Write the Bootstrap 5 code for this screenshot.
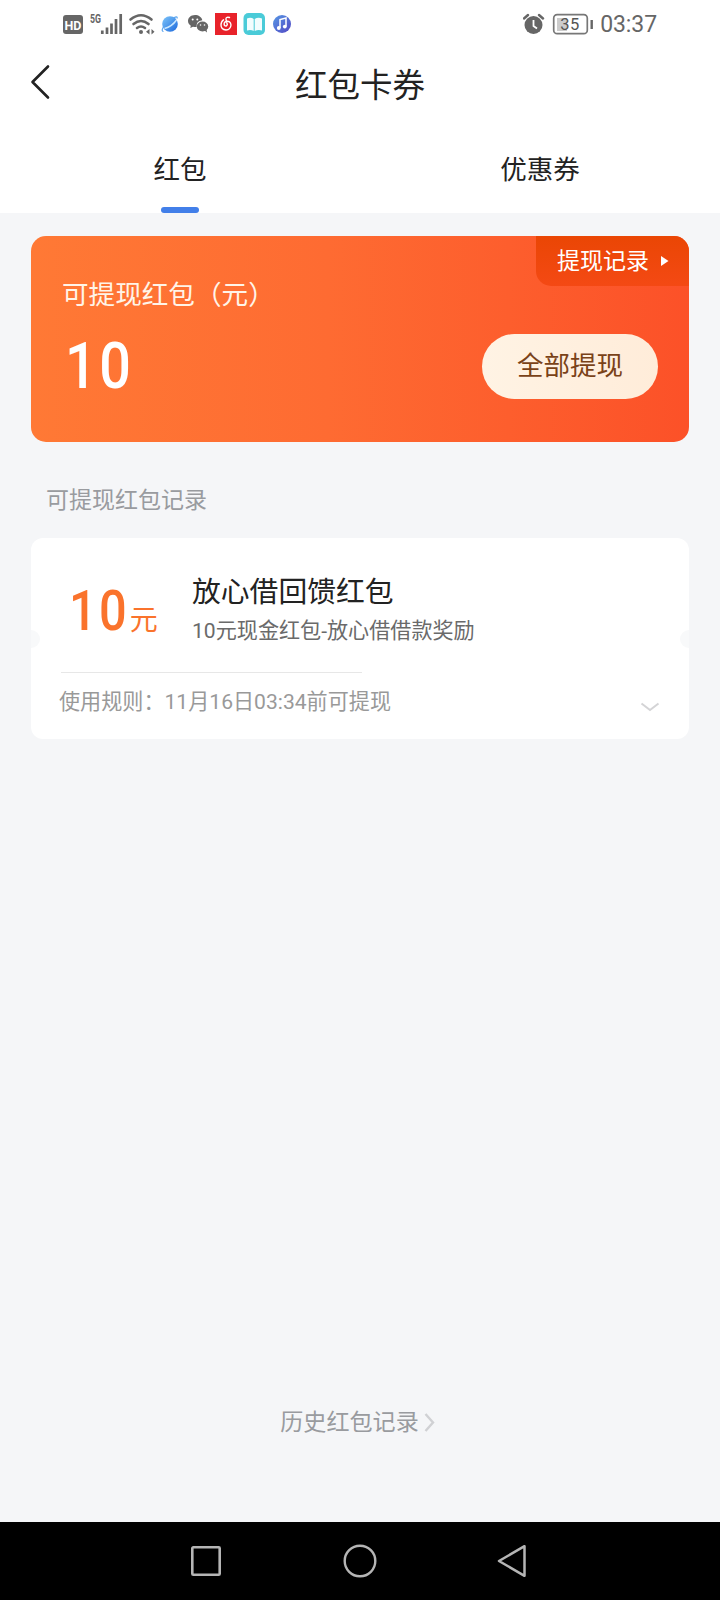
<!DOCTYPE html>
<html lang="zh-CN">
<head>
<meta charset="utf-8">
<meta name="viewport" content="width=device-width, initial-scale=1">
<title>红包卡券</title>
<link href="https://cdn.jsdelivr.net/npm/bootstrap@5.3.0/dist/css/bootstrap.min.css" rel="stylesheet">
<style>
  body { font-family: Roboto, "Noto Sans CJK SC", sans-serif; background: #f5f6f8; color: #222; }
  svg { display: block; flex: none; }
  .app-screen { height: 1600px; overflow: hidden; }
  .status-bar { height: 48px; padding: 0 63px 0 63px; color: #666; }
  .clock { font-size: 23px; line-height: 46px; padding-top: 2px; letter-spacing: -.1px; }
  .title-bar { height: 72px; padding: 0 30px; }
  .title-bar h1 { font-size: 32.5px; line-height: 68px; padding-top: 4px; }
  .title-side { width: 22px; }
  .tab-row { height: 93px; }
  .tab-row .nav-link { color: #222; font-size: 26.5px; line-height: 99px; height: 93px; padding: 0; border-radius: 0; }
  .tab-mark { width: 38px; height: 6px; border-radius: 3px; background: #427fe9; bottom: 0; }
  .page-body { padding: 23px 31px 0; }
  .balance-card { height: 206px; border-radius: 15px; background: linear-gradient(90deg, #ff7935, #fe6b32 45%, #fc5128); color: #fff; overflow: hidden; padding: 39px 31px 0; }
  .balance-label { font-size: 26.6px; line-height: 40px; color: #fff4e8; }
  .balance-row { height: 64px; margin-top: 19px; }
  .balance-sum { font-size: 64px; line-height: 62px; padding: 2px 0 0 3px; }
  .digits { display: inline-block; font-weight: 500; letter-spacing: .045em; transform: scaleX(.87); transform-origin: left; }
  .record-tag { top: 0; right: 0; width: 153px; height: 50px; padding: 2px 0 0 21px; gap: 12px; border-bottom-left-radius: 15px; background: linear-gradient(#ea4604, #f44914); font-size: 23px; }
  .record-tag svg { margin-top: -2px; }
  .cash-btn { width: 176px; height: 65px; font-size: 26.5px; color: #7a4218; background: linear-gradient(90deg, #fff3e4, #ffecd9); border: 0; padding: 0; }
  .section-name { font-size: 23px; line-height: 34px; margin: 42px 0 20px 15px; color: #999b9f; }
  .coupon { height: 201px; border-radius: 12px; background: #fff; overflow: hidden; padding: 36px 29px 0 30px; }
  .coupon-top { height: 98px; }
  .coupon-sum { width: 131px; color: #fa732c; padding-left: 8px; font-size: 56px; line-height: 75px; }
  .coupon-sum small { font-size: 28px; margin-left: -8px; }
  .coupon-name { font-size: 28.8px; line-height: 36px; }
  .coupon-note { font-size: 21.1px; line-height: 36px; margin-top: 3px; color: #6a6a6a; }
  .coupon-line { width: 301px; height: 1px; background: #e7e7e7; }
  .coupon-rule { font-size: 21.1px; line-height: 32px; margin: 13px 0 0 -2px; color: #999; }
  .notch { width: 18px; height: 18px; border-radius: 50%; background: #f8f9fa; top: 92px; }
  .notch-l { left: -9px; } .notch-r { right: -9px; }
  .history { font-size: 23.1px; line-height: 34px; color: #999b9f; margin-bottom: 82px; padding-right: 5px; gap: 5px; }
  .soft-keys { height: 78px; background: #000; padding: 0 191px 0 190px; }
</style>
</head>
<body>
<div class="app-screen d-flex flex-column">
  <header class="bg-white">
    <div class="status-bar d-flex align-items-center justify-content-between">
      <svg width="232" height="48" viewBox="63 0 232 48">
        <defs>
          <linearGradient id="globe" x2="1" y2="1"><stop stop-color="#7ec6fa"/><stop offset="1" stop-color="#1c68dc"/></linearGradient>
          <linearGradient id="music" x2="1" y2="1"><stop stop-color="#5698e4"/><stop offset="1" stop-color="#5347c4"/></linearGradient>
        </defs>
        <rect x="63" y="15" width="20" height="19" rx="3" fill="#666"/>
        <text x="73" y="29.500" text-anchor="middle" font-size="12.500" font-weight="700" fill="#fff">HD</text>
        <text x="90" y="23" font-size="12" font-weight="700" fill="#666" textLength="11" lengthAdjust="spacingAndGlyphs">5G</text>
        <path d="M102.300 30.500V34M107 27.500V34M111.500 23.500V34M116 19V34M120.700 14V34" stroke="#666" stroke-width="2.700"/>
        <g fill="none" stroke="#666" stroke-width="2.600" stroke-linecap="round"><path d="M130.500 19.500Q141 11 151.500 19.500M133.500 24Q141 18 148.500 24M137 28Q141 25 145 28"/></g>
        <circle cx="141" cy="32" r="2" fill="#666"/>
        <path d="M149.500 29V34.500L146 31.700ZM151.500 29V34.500L154.500 31.700Z" fill="#666"/>
        <circle cx="170" cy="24" r="7.800" fill="url(#globe)"/>
        <path d="M163.500 31.500C160 31 164 25 169.500 20.500C174 17 178 15.500 177 18.500" fill="none" stroke="#5ba5ee" stroke-width="1.200"/>
        <path d="M164.500 28.500Q172 26.500 176.500 20" fill="none" stroke="#c9e7ff" stroke-width="1.500"/>
        <path d="M195 15C190.500 15 188 18 188 21C188 23 189.200 24.700 190.800 25.800L190.300 28L193 26.800Q195 27.300 196.500 27Q196 21 202.300 20.200C201.700 17 198.500 15 195 15Z" fill="#666"/>
        <ellipse cx="202.500" cy="26.500" rx="5.700" ry="5" fill="#666"/><path d="M204 30L207 32.500L206.500 29Z" fill="#666"/>
        <g fill="#fff"><circle cx="192.700" cy="19.500" r="1"/><circle cx="197.300" cy="19.500" r="1"/><circle cx="200.500" cy="25" r=".8"/><circle cx="204.500" cy="25" r=".8"/></g>
        <rect x="215" y="13" width="22" height="22" fill="#e8232b"/>
        <path d="M229.500 17.500Q225.500 16.500 226 19.500L227.300 24.500Q226.500 27 224.500 25.500Q223.300 22.500 226 21.500Q230.500 20.500 231 25Q230.500 29.800 226 30Q221 29.500 221 25Q221 21.500 223.500 19.800" fill="none" stroke="#fff" stroke-width="1.400" stroke-linecap="round"/>
        <rect x="243.500" y="13" width="21.500" height="22" rx="5" fill="#4acbd8"/>
        <path d="M247 18.500Q251 17 253.700 19V31Q251 29.500 247 30.500ZM262 18.500Q258 17 254.700 19V31Q258 29.500 262 30.500Z" fill="#f2fdfe"/>
        <circle cx="282" cy="24" r="9" fill="url(#music)"/>
        <path d="M280 28V19.500L286 18V26.500" fill="none" stroke="#fff" stroke-width="1.500"/>
        <circle cx="278.800" cy="28" r="1.900" fill="#fff"/><circle cx="284.800" cy="26.600" r="1.900" fill="#fff"/>
      </svg>
      <div class="d-flex align-items-center">
        <svg width="77" height="48" viewBox="523 0 77 48">
          <circle cx="533.500" cy="25" r="9" fill="#666"/>
          <path d="M524 18.500L528 15M543 18.500L539 15" stroke="#666" stroke-width="2.400" stroke-linecap="round"/>
          <path d="M533.500 20V26L537 28.500" fill="none" stroke="#fff" stroke-width="1.800"/>
          <rect x="557" y="18" width="10" height="13" fill="#ccc"/>
          <rect x="553.700" y="14.700" width="33.600" height="19" rx="3.500" fill="none" stroke="#777" stroke-width="1.700"/>
          <path d="M591.700 20V29" stroke="#666" stroke-width="2.400"/>
          <text x="570" y="30" text-anchor="middle" font-size="16.500" letter-spacing=".5" fill="#555">35</text>
        </svg>
        <span class="clock">03:37</span>
      </div>
    </div>
    <div class="title-bar d-flex align-items-center justify-content-between">
      <svg class="title-side" width="22" height="72" viewBox="30 48 22 72" fill="none" stroke="#222" stroke-width="2.600" stroke-linecap="round" stroke-linejoin="round"><path d="M48 66.500L32.500 82L48 97.500"/></svg>
      <h1 class="m-0 fw-normal">红包卡券</h1>
      <span class="title-side"></span>
    </div>
    <nav class="tab-row nav nav-justified">
      <div class="nav-item position-relative d-flex justify-content-center">
        <a class="nav-link" href="#">红包</a><span class="tab-mark position-absolute"></span>
      </div>
      <div class="nav-item"><a class="nav-link" href="#">优惠券</a></div>
    </nav>
  </header>

  <main class="page-body flex-grow-1">
    <section class="balance-card position-relative">
      <div class="record-tag position-absolute d-flex align-items-center">
        <span>提现记录</span>
        <svg width="8" height="10" viewBox="0 0 8 10"><path d="M0 0L7.500 5L0 10Z" fill="#fff"/></svg>
      </div>
      <div class="balance-label">可提现红包（元）</div>
      <div class="balance-row d-flex align-items-center justify-content-between">
        <span class="balance-sum"><span class="digits">10</span></span>
        <button class="cash-btn btn rounded-pill">全部提现</button>
      </div>
    </section>
    <h2 class="section-name fw-normal">可提现红包记录</h2>
    <section class="coupon position-relative">
      <span class="notch notch-l position-absolute"></span><span class="notch notch-r position-absolute"></span>
      <div class="coupon-top d-flex">
        <div class="coupon-sum text-nowrap"><span class="digits">10</span><small>元</small></div>
        <div>
          <div class="coupon-name">放心借回馈红包</div>
          <div class="coupon-note">10元现金红包-放心借借款奖励</div>
        </div>
      </div>
      <div class="coupon-line"></div>
      <div class="d-flex justify-content-between align-items-start">
        <div class="coupon-rule">使用规则：11月16日03:34前可提现</div>
        <svg class="mt-4" width="20" height="24" viewBox="0 0 20 24" fill="none" stroke="#d4d4d6" stroke-width="2"><path d="M1.500 6.500L10 13L18.500 6.500"/></svg>
      </div>
    </section>
  </main>

  <div class="history d-flex justify-content-center align-items-center">
    <span>历史红包记录</span>
    <svg width="11" height="20" viewBox="0 0 11 20" fill="none" stroke="#d0d1d4" stroke-width="2.400"><path d="M1.500 1L9 9.500L1.500 18"/></svg>
  </div>
  <footer class="soft-keys d-flex align-items-center justify-content-between">
    <svg width="32" height="34" viewBox="0 0 32 34" fill="none" stroke="#b5b5b5" stroke-width="2.600"><rect x="2.300" y="3.300" width="27.400" height="27.400" rx="1"/></svg>
    <svg width="34" height="34" viewBox="0 0 34 34" fill="none" stroke="#b5b5b5" stroke-width="2.400"><circle cx="17" cy="17" r="15.300"/></svg>
    <svg width="32" height="34" viewBox="0 0 32 34" fill="none" stroke="#b5b5b5" stroke-width="2.500" stroke-linejoin="round"><path d="M27.500 2.200V31.800L2 17Z"/></svg>
  </footer>
</div>
<script src="https://cdn.jsdelivr.net/npm/bootstrap@5.3.0/dist/js/bootstrap.bundle.min.js"></script>
</body>
</html>
